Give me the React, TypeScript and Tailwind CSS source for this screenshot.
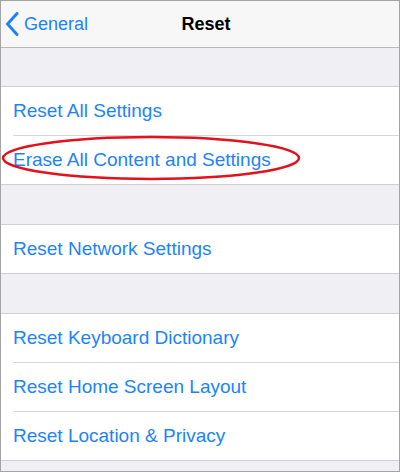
import { ReactNode } from 'react';

const font = { fontFamily: '"Liberation Sans", Arial, sans-serif' };

function Row({ label, last, children }: { label: string; last?: boolean; children?: ReactNode }) {
  return (
    <div className="relative bg-white">
      <div className="h-[48px] flex items-center pl-[12px] text-[19px] text-[#1c84f8]">{label}</div>
      {!last && <div className="ml-[12px] h-px bg-[#d6d6da]" />}
      {children}
    </div>
  );
}

function Group({ items, gap, children }: { items: string[]; gap: string; children?: ReactNode }) {
  return (
    <>
      <div className={`${gap} bg-[#efeff4]`} />
      <div className="relative border-y border-[#cfcfd4] bg-white">
        {items.map((item, i) => (
          <Row key={item} label={item} last={i === items.length - 1} />
        ))}
        {children}
      </div>
    </>
  );
}

export default function App() {
  return (
    <div className="w-[400px] h-[472px] border border-[#a3a3a3] bg-[#efeff4] overflow-hidden flex flex-col" style={font}>
      <div className="h-[47px] shrink-0 bg-[#f7f7f8] border-b border-[#b8b8bc] relative flex items-center">
        <div className="flex items-center pl-[4px] text-[#1c84f8] text-[18px]">
          <svg width="14" height="24" viewBox="0 0 14 24" className="mr-[5px]">
            <path d="M12 1.5 L2.5 12 L12 22.5" fill="none" stroke="#1c84f8" strokeWidth="3" strokeLinecap="round" strokeLinejoin="round" />
          </svg>
          <span>General</span>
        </div>
        <div className="absolute left-0 right-0 text-center text-[18px] font-bold text-black pl-[12px]">Reset</div>
      </div>

      <Group items={['Reset All Settings', 'Erase All Content and Settings']} gap="h-[38px]">
        <svg className="absolute left-0 top-[48px]" width="302" height="50" viewBox="0 0 302 50">
          <ellipse cx="150" cy="23" rx="148" ry="21" fill="none" stroke="#e3111b" strokeWidth="2.5" />
        </svg>
      </Group>
      <Group items={['Reset Network Settings']} gap="h-[39px]" />
      <Group items={['Reset Keyboard Dictionary', 'Reset Home Screen Layout', 'Reset Location & Privacy']} gap="h-[39px]" />
    </div>
  );
}
